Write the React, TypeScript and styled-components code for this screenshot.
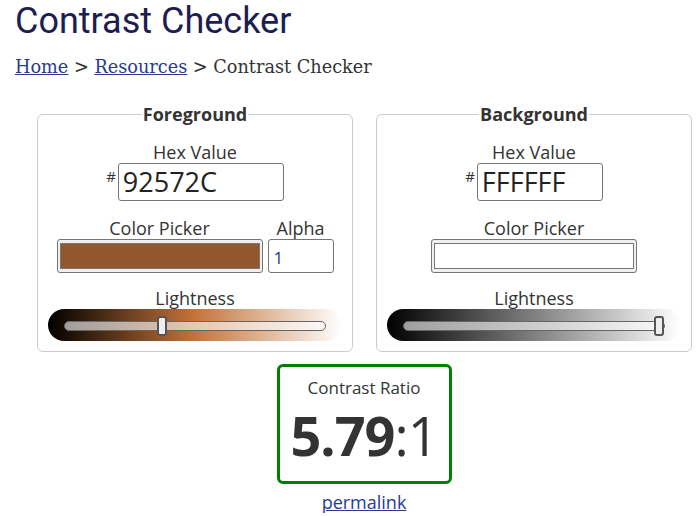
import React from "react";
import styled, { createGlobalStyle } from "styled-components";

const Global = createGlobalStyle`
  html, body { margin: 0; padding: 0; background: #fff; }
  body { font-family: "Open Sans", sans-serif; color: #333; }
  * { box-sizing: border-box; }
`;

const Page = styled.div`
  padding: 0 0 0 15px;
  width: 696px;
`;

const Title = styled.h1`
  margin: 1px 0 0;
  font-family: Roboto, sans-serif;
  font-weight: 400;
  font-size: 36px;
  line-height: 40px;
  color: #1d1d52;
`;

const Crumbs = styled.nav`
  margin-top: 14px;
  font-family: "DejaVu Serif", serif;
  font-size: 17.7px;
  line-height: 24px;
  color: #333;
`;

const Link = styled.a`
  color: #283b91;
  text-decoration: underline;
`;

const Main = styled.div`
  margin: 24px 0 0 22px;
  width: 654px;
  display: flex;
  flex-direction: column;
  align-items: center;
`;

const Panels = styled.div`
  display: flex;
  gap: 23px;
  align-self: stretch;
`;

const Panel = styled.fieldset`
  width: 316px;
  margin: 0;
  padding: 0 10px 10px;
  border: 1px solid #ccc;
  border-radius: 6px;
  display: flex;
  flex-direction: column;
  align-items: center;
`;

const Legend = styled.legend`
  margin: 0 auto;
  padding: 0 1px;
  font-weight: 700;
  font-size: 18px;
  line-height: 22px;
  color: #333;
`;

const Label = styled.div<{ $top: number }>`
  margin-top: ${(p) => p.$top}px;
  font-size: 18px;
  line-height: 22px;
  color: #333;
  text-align: center;
`;

const HexRow = styled.div`
  display: flex;
  align-items: flex-start;
  gap: 2px;
`;

const Hash = styled.span`
  font-size: 15px;
  line-height: 15px;
  margin-top: 6px;
  color: #333;
`;

const HexInput = styled.div<{ $w: number }>`
  width: ${(p) => p.$w}px;
  height: 38px;
  border: 1px solid #767676;
  border-radius: 3px;
  padding: 0 4px;
  font-size: 27px;
  line-height: 36px;
  color: #222;
`;

const PickRow = styled.div`
  display: flex;
  gap: 5px;
  align-items: flex-start;
`;

const PickCol = styled.div`
  display: flex;
  flex-direction: column;
  align-items: center;
`;

const ColorWell = styled.div<{ $c: string }>`
  width: 206px;
  height: 34px;
  background: #efefef;
  border: 1px solid #767676;
  border-radius: 3px;
  padding: 3px 2px;
  display: flex;
  &::after {
    content: "";
    flex: 1;
    background: ${(p) => p.$c};
    border: 1px solid #777;
  }
`;

const AlphaInput = styled.div`
  width: 66px;
  height: 34px;
  border: 1px solid #767676;
  border-radius: 3px;
  padding: 0 5px;
  font-size: 17px;
  line-height: 36px;
  color: #1c3a8c;
`;

const Slider = styled.div<{ $g: string }>`
  width: 294px;
  height: 32px;
  border-radius: 16px;
  background: ${(p) => p.$g};
  padding: 12px 16px 0 16px;
  align-self: flex-start;
  margin-left: 0;
`;

const Track = styled.div`
  position: relative;
  height: 10px;
  border: 1px solid #666;
  border-radius: 5px;
  background: rgba(255, 255, 255, 0.6);
`;

const Thumb = styled.div`
  position: absolute;
  top: -6px;
  width: 10px;
  height: 20px;
  margin-left: -5px;
  border: 2px solid #555;
  border-radius: 3px;
  background: #eee;
`;

const RatioBox = styled.div`
  margin-top: 12px;
  width: 175px;
  height: 120px;
  border: 3px solid #008000;
  border-radius: 6px;
  padding-top: 10px;
  text-align: center;
`;

const RatioLabel = styled.div`
  font-size: 17px;
  line-height: 22px;
  color: #333;
`;

const Ratio = styled.div`
  margin-top: 5px;
  font-size: 54px;
  line-height: 62px;
  color: #333;
  letter-spacing: -1px;
  b { font-weight: 700; }
`;

const Perma = styled(Link)`
  margin-top: 6px;
  font-size: 18px;
  line-height: 24px;
`;

function LightSlider({ gradient, value }: { gradient: string; value: number }) {
  return (
    <Slider $g={gradient}>
      <Track>
        <Thumb style={{ left: `${value * 100}%` }} />
      </Track>
    </Slider>
  );
}

export default function App() {
  return (
    <Page>
      <Global />
      <Title>Contrast Checker</Title>
      <Crumbs>
        <Link href="#">Home</Link> &gt; <Link href="#">Resources</Link> &gt; Contrast Checker
      </Crumbs>
      <Main>
        <Panels>
          <Panel>
            <Legend>Foreground</Legend>
            <Label $top={16}>Hex Value</Label>
            <HexRow>
              <Hash>#</Hash>
              <HexInput $w={166}>92572C</HexInput>
            </HexRow>
            <PickRow>
              <PickCol>
                <Label $top={16}>Color Picker</Label>
                <ColorWell $c="#92572C" />
              </PickCol>
              <PickCol>
                <Label $top={16}>Alpha</Label>
                <AlphaInput>1</AlphaInput>
              </PickCol>
            </PickRow>
            <Label $top={14}>Lightness</Label>
            <LightSlider
              gradient="linear-gradient(to right, hsl(25,54%,0%), hsl(25,54%,50%), hsl(25,54%,100%))"
              value={0.373}
            />
          </Panel>
          <Panel>
            <Legend>Background</Legend>
            <Label $top={16}>Hex Value</Label>
            <HexRow>
              <Hash>#</Hash>
              <HexInput $w={126}>FFFFFF</HexInput>
            </HexRow>
            <Label $top={16}>Color Picker</Label>
            <ColorWell $c="#FFFFFF" />
            <Label $top={14}>Lightness</Label>
            <LightSlider
              gradient="linear-gradient(to right, #000, #808080, #fff)"
              value={0.98}
            />
          </Panel>
        </Panels>
        <RatioBox>
          <RatioLabel>Contrast Ratio</RatioLabel>
          <Ratio>
            <b>5.79</b>:1
          </Ratio>
        </RatioBox>
        <Perma href="#">permalink</Perma>
      </Main>
    </Page>
  );
}
